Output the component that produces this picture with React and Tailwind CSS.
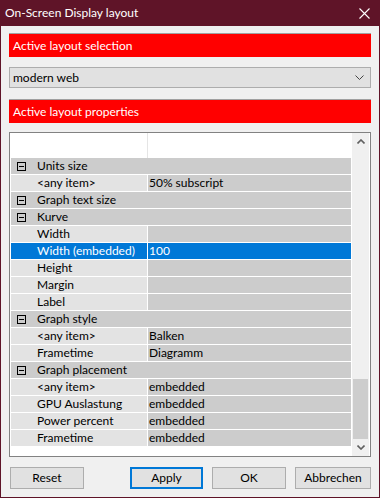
import React from "react";

const rows = [
  { type: "group", label: "Units size" },
  { type: "item", label: "<any item>", value: "50% subscript" },
  { type: "group", label: "Graph text size" },
  { type: "group", label: "Kurve" },
  { type: "item", label: "Width", value: "" },
  { type: "item", label: "Width (embedded)", value: "100", selected: true },
  { type: "item", label: "Height", value: "" },
  { type: "item", label: "Margin", value: "" },
  { type: "item", label: "Label", value: "" },
  { type: "group", label: "Graph style" },
  { type: "item", label: "<any item>", value: "Balken" },
  { type: "item", label: "Frametime", value: "Diagramm" },
  { type: "group", label: "Graph placement" },
  { type: "item", label: "<any item>", value: "embedded" },
  { type: "item", label: "GPU Auslastung", value: "embedded" },
  { type: "item", label: "Power percent", value: "embedded" },
  { type: "item", label: "Frametime", value: "embedded" },
];

const MinusBox = () => (
  <div className="w-[9px] h-[9px] border border-black flex items-center justify-center">
    <div className="w-[5px] h-[1px] bg-black" />
  </div>
);

const Row = ({ row }) => {
  if (row.type === "group") {
    return (
      <div className="h-[17px] border-b border-white flex items-center bg-[#cccccc]">
        <div className="w-[26px] pl-[6px] shrink-0">
          <MinusBox />
        </div>
        <span>{row.label}</span>
      </div>
    );
  }
  const sel = row.selected;
  return (
    <div className={`h-[17px] border-b border-white flex ${sel ? "text-white" : ""}`}>
      <div className={`w-[136px] pl-[26px] flex items-center ${sel ? "bg-[#0078d7]" : "bg-[#e3e3e3]"}`}>
        {row.label}
      </div>
      <div className={`flex-1 ml-[1px] pl-[1px] flex items-center ${sel ? "bg-[#0078d7]" : "bg-[#cccccc]"}`}>
        {row.value}
      </div>
    </div>
  );
};

const Button = ({ children, primary, className }) => (
  <button
    className={`h-[22px] bg-[#e1e1e1] text-black ${primary ? "border-2 border-[#0078d7]" : "border border-[#adadad]"} ${className}`}
  >
    {children}
  </button>
);

export default function App() {
  return (
    <div
      className="w-[380px] h-[498px] flex flex-col border-x border-b border-[#5f1428] bg-[#f0f0f0] text-[12px] text-black leading-none"
      style={{ fontFamily: 'Lato, "Liberation Sans", Arial, sans-serif' }}
    >
      <div className="h-[26px] shrink-0 bg-[#5f1428] text-white text-[12px] flex items-center justify-between pl-[4px] pr-[8px]">
        <span>On-Screen Display layout</span>
        <svg width="11" height="11" viewBox="0 0 11 11" className="mr-[1px]">
          <path d="M0.5 0.5 L10.5 10.5 M10.5 0.5 L0.5 10.5" stroke="white" strokeWidth="1.1" />
        </svg>
      </div>

      <div className="flex-1 flex flex-col px-[8px] pt-[7px]">
        <div className="h-[24px] bg-[#ff0000] border-t border-[#a0a0a0] text-white flex items-center pl-[4px]">
          Active layout selection
        </div>

        <div className="mt-[10px] h-[21px] bg-[#e1e1e1] border border-[#adadad] flex items-center justify-between pl-[3px] pr-[6px]">
          <span>modern web</span>
          <svg width="9" height="5" viewBox="0 0 9 5">
            <path d="M0.5 0.5 L4.5 4.5 L8.5 0.5" stroke="#444" strokeWidth="1" fill="none" />
          </svg>
        </div>

        <div className="mt-[11px] h-[24px] bg-[#ff0000] border-t border-[#a0a0a0] text-white flex items-center pl-[4px]">
          Active layout properties
        </div>

        <div className="mt-[9px] h-[325px] border border-[#828282] bg-white flex">
          <div className="flex-1 flex flex-col pl-[1px] pr-[1px]">
            <div className="h-[25px] flex shrink-0">
              <div className="w-[137px] border-r border-[#e5e5e5]" />
            </div>
            {rows.map((r, i) => (
              <Row key={i} row={r} />
            ))}
          </div>
          <div className="w-[17px] bg-[#f0f0f0] flex flex-col mr-[1px]">
            <div className="h-[17px] flex items-center justify-center">
              <svg width="8" height="5" viewBox="0 0 8 5">
                <path d="M0.5 4.5 L4 1 L7.5 4.5" stroke="#606060" strokeWidth="1.6" fill="none" />
              </svg>
            </div>
            <div className="flex-1" />
            <div className="h-[60px] mx-[1px] bg-[#cdcdcd]" />
            <div className="h-[17px] flex items-center justify-center">
              <svg width="8" height="5" viewBox="0 0 8 5">
                <path d="M0.5 0.5 L4 4 L7.5 0.5" stroke="#606060" strokeWidth="1.6" fill="none" />
              </svg>
            </div>
          </div>
        </div>

        <div className="mt-[10px] flex justify-between pl-[1px]">
          <Button className="w-[74px]">Reset</Button>
          <div className="flex gap-[9px]">
            <Button primary className="w-[73px]">Apply</Button>
            <Button className="w-[74px]">OK</Button>
            <Button className="w-[76px]">Abbrechen</Button>
          </div>
        </div>
      </div>
    </div>
  );
}
